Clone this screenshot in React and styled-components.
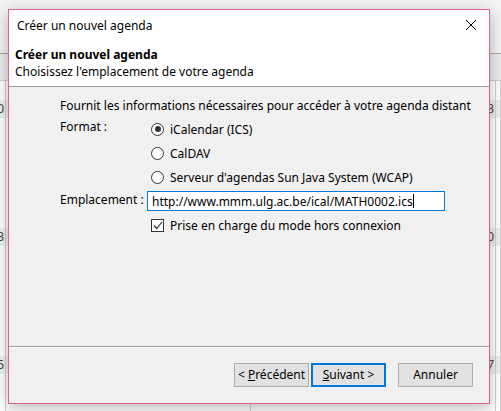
import React from 'react'
import styled, { createGlobalStyle } from 'styled-components'

const Global = createGlobalStyle`
  html, body { margin: 0; padding: 0; }
  body {
    font-family: "Noto Sans", "Liberation Sans", sans-serif;
    font-size: 12px;
    color: #000;
  }
`

const Desktop = styled.div`
  position: relative;
  width: 501px;
  height: 411px;
  overflow: hidden;
  background: #fff;
`

/* calendar behind the dialog */
const TopBand = styled.div`
  height: 53px;
  background: #f3f3f3;
  border-bottom: 1px solid #a9a9a9;
`
const HeadBand = styled.div`
  height: 26px;
  background: #ebebeb;
  border-bottom: 1px solid #cfcfcf;
`
const Week = styled.div`
  display: grid;
  grid-template-columns: 6px 245px 245px 1fr;
  height: 128px;
`
const Day = styled.div`
  border-right: 1px solid #d2d2d2;
  overflow: hidden;
  padding-top: 19px;
`
const DayNum = styled.div`
  height: 18px;
  line-height: 18px;
  background: #efefef;
  display: flex;
  justify-content: flex-end;
  white-space: nowrap;
  color: #444;
  padding-right: 1px;
`

const Dialog = styled.div`
  position: absolute;
  left: 8px;
  top: 9px;
  width: 480px;
  height: 393px;
  border: 1px solid #e3608e;
  background: #f0f0f0;
  box-shadow: 0 4px 14px rgba(0, 0, 0, 0.28);
  display: flex;
  flex-direction: column;
`
const Header = styled.div`
  background: #fff;
  height: 76px;
  border-bottom: 1px solid #a0a0a0;
  display: flex;
  flex-direction: column;
`
const TitleBar = styled.div`
  height: 30px;
  display: flex;
  align-items: center;
  justify-content: space-between;
  padding: 0 12px 0 8px;
  font-size: 12px;
`
const Close = styled.svg`
  width: 12px;
  height: 12px;
`
const WizardHead = styled.div`
  padding: 6px 6px 0;
  line-height: 17px;
`
const WizardTitle = styled.div`
  font-weight: bold;
`
const Body = styled.div`
  flex: 1;
  padding: 11px 0 0 51px;
  border-bottom: 1px solid #a0a0a0;
`
const Intro = styled.div`
  height: 16px;
  line-height: 16px;
`
const Form = styled.div`
  display: grid;
  grid-template-columns: 87px 1fr;
  margin-top: 3px;
`
const Label = styled.div`
  line-height: 16px;
  padding-top: ${p => p.$top || 0}px;
  align-self: ${p => p.$center ? 'center' : 'start'};
`
const Options = styled.div`
  display: flex;
  flex-direction: column;
  padding-left: 4px;
`
const Option = styled.label`
  height: 24px;
  display: flex;
  align-items: center;
  gap: 6px;
  margin-top: ${p => p.$gap || 0}px;
`
const Radio = styled.span`
  width: 11px;
  height: 11px;
  border: 1px solid #333;
  border-radius: 50%;
  background: #fff;
  display: flex;
  align-items: center;
  justify-content: center;
  &::after {
    content: '';
    display: ${p => p.$on ? 'block' : 'none'};
    width: 6px;
    height: 6px;
    border-radius: 50%;
    background: #333;
  }
`
const Check = styled.span`
  width: 11px;
  height: 11px;
  border: 1px solid #333;
  background: #fff;
  display: flex;
  align-items: center;
  justify-content: center;
`
const Field = styled.div`
  margin-top: 2px;
  width: 292px;
  height: 18px;
  border: 1px solid #0078d7;
  background: #fff;
  display: flex;
  align-items: center;
  padding-left: 4px;
  white-space: nowrap;
`
const Caret = styled.span`
  display: inline-block;
  width: 1px;
  height: 14px;
  background: #000;
`
const Footer = styled.div`
  height: 53px;
  display: flex;
  align-items: center;
  justify-content: flex-end;
  padding: 0 16px 2px 0;
  border-top: 1px solid #fff;
`
const Button = styled.button`
  width: 75px;
  height: 24px;
  font: inherit;
  color: #000;
  background: #e1e1e1;
  border: ${p => p.$focus ? '2px solid #0078d7' : '1px solid #adadad'};
  margin-left: ${p => p.$gap || 0}px;
  padding: 0;
  u { text-decoration: underline; }
`

const weeks = [
  ['10', '', '3', ''],
  ['13', '', '10', ''],
  ['15', '', '17', ''],
]

export default function App() {
  return (
    <Desktop>
      <Global />
      <TopBand />
      <HeadBand />
      {weeks.map((w, i) => (
        <Week key={i}>
          {w.map((d, j) => (
            <Day key={j}>
              <DayNum>{d}</DayNum>
            </Day>
          ))}
        </Week>
      ))}

      <Dialog>
        <Header>
          <TitleBar>
            <span>Créer un nouvel agenda</span>
            <Close viewBox="0 0 12 12">
              <path d="M1 1 L11 11 M11 1 L1 11" stroke="#000" strokeWidth="1" fill="none" />
            </Close>
          </TitleBar>
          <WizardHead>
            <WizardTitle>Créer un nouvel agenda</WizardTitle>
            <div>Choisissez l'emplacement de votre agenda</div>
          </WizardHead>
        </Header>

        <Body>
          <Intro>Fournit les informations nécessaires pour accéder à votre agenda distant</Intro>
          <Form>
            <Label $top={2}>Format :</Label>
            <Options>
              <Option><Radio $on />iCalendar (ICS)</Option>
              <Option><Radio />CalDAV</Option>
              <Option><Radio />Serveur d'agendas Sun Java System (WCAP)</Option>
            </Options>
            <Label $center>Emplacement :</Label>
            <Field>http://www.mmm.ulg.ac.be/ical/MATH0002.ics<Caret /></Field>
            <span />
            <Options>
              <Option $gap={2}>
                <Check>
                  <svg width="10" height="9" viewBox="0 0 10 9">
                    <path d="M1 4.5 L3.8 7.5 L9 1" stroke="#333" strokeWidth="1.2" fill="none" />
                  </svg>
                </Check>
                Prise en charge du mode hors connexion
              </Option>
            </Options>
          </Form>
        </Body>

        <Footer>
          <Button>&lt; <u>P</u>récédent</Button>
          <Button $focus $gap={2}><u>S</u>uivant &gt;</Button>
          <Button $gap={12}>Annuler</Button>
        </Footer>
      </Dialog>
    </Desktop>
  )
}
